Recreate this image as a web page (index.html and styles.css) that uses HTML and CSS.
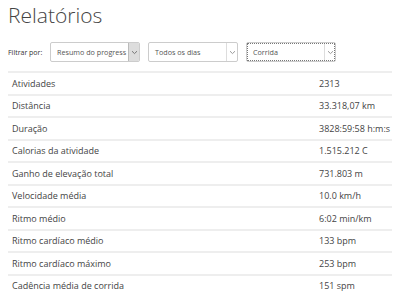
FILE: index.html
```html
<!DOCTYPE html>
<html lang="pt">
<head>
    <meta charset="UTF-8">
    <meta name="viewport" content="width=device-width, initial-scale=1.0">
    <title>Relatórios</title>
    <link rel="stylesheet" href="styles.css">
</head>
<body>
    <h1 class="title">Relatórios</h1>
    <div class="filters">
        <span class="filter-label">Filtrar por:</span>
        <div class="select hover">
            <span class="select-text">Resumo do progress</span>
            <span class="select-arrow"><svg width="7" height="5" viewBox="0 0 7 5"><path d="M1 1.2 L3.5 3.6 L6 1.2" fill="none" stroke="#777" stroke-width="1"/></svg></span>
        </div>
        <div class="select">
            <span class="select-text">Todos os dias</span>
            <span class="select-arrow"><svg width="7" height="5" viewBox="0 0 7 5"><path d="M1 1.2 L3.5 3.6 L6 1.2" fill="none" stroke="#999" stroke-width="1"/></svg></span>
        </div>
        <div class="select focus">
            <span class="select-text">Corrida</span>
            <span class="select-arrow"><svg width="7" height="5" viewBox="0 0 7 5"><path d="M1 1.2 L3.5 3.6 L6 1.2" fill="none" stroke="#999" stroke-width="1"/></svg></span>
        </div>
    </div>
    <table class="stats">
        <tr><td>Atividades</td><td>2313</td></tr>
        <tr><td>Distância</td><td>33.318,07 km</td></tr>
        <tr><td>Duração</td><td>3828:59:58 h:m:s</td></tr>
        <tr><td>Calorias da atividade</td><td>1.515.212 C</td></tr>
        <tr><td>Ganho de elevação total</td><td>731.803 m</td></tr>
        <tr><td>Velocidade média</td><td>10.0 km/h</td></tr>
        <tr><td>Ritmo médio</td><td>6:02 min/km</td></tr>
        <tr><td>Ritmo cardíaco médio</td><td>133 bpm</td></tr>
        <tr><td>Ritmo cardíaco máximo</td><td>253 bpm</td></tr>
        <tr><td>Cadência média de corrida</td><td>151 spm</td></tr>
    </table>
</body>
</html>
```
FILE: styles.css
```css
body {
    font-family: "Open Sans", Arial, sans-serif;
    color: #333;
    background-color: #fff;
    margin: 0;
    padding: 0 0 0 8px;
}

.title {
    font-size: 21px;
    font-weight: 300;
    color: #444;
    margin: 0;
    padding-top: 1px;
    line-height: 28px;
}

.filters {
    display: flex;
    align-items: center;
    gap: 8px;
    margin-top: 13px;
    height: 20px;
}

.filter-label {
    font-size: 7px;
    color: #333;
    white-space: nowrap;
    width: 34px;
}

.select {
    display: flex;
    align-items: stretch;
    width: 88px;
    height: 18px;
    border: 1px solid #ccc;
    border-radius: 2px;
    background: white;
    overflow: hidden;
}

.select-text {
    flex: 1;
    font-size: 7.2px;
    color: #555;
    line-height: 18px;
    padding-left: 6px;
    white-space: nowrap;
    overflow: hidden;
}

.select-arrow {
    width: 10px;
    border-left: 1px solid #ddd;
    display: flex;
    align-items: center;
    justify-content: center;
}

.select.hover .select-arrow {
    background-color: #ddd;
    border-left-color: #bbb;
}

.select.focus {
    outline: 1px dotted #777;
    outline-offset: -2px;
}

.stats {
    width: calc(100% - 8px);
    border-collapse: collapse;
    margin-top: 9px;
    font-size: 9px;
    color: #444;
}

.stats td {
    border-top: 2px solid #eee;
    height: 20.5px;
    padding: 0 0 0 4px;
}

.stats td:last-child {
    width: 73px;
    white-space: nowrap;
}
```
